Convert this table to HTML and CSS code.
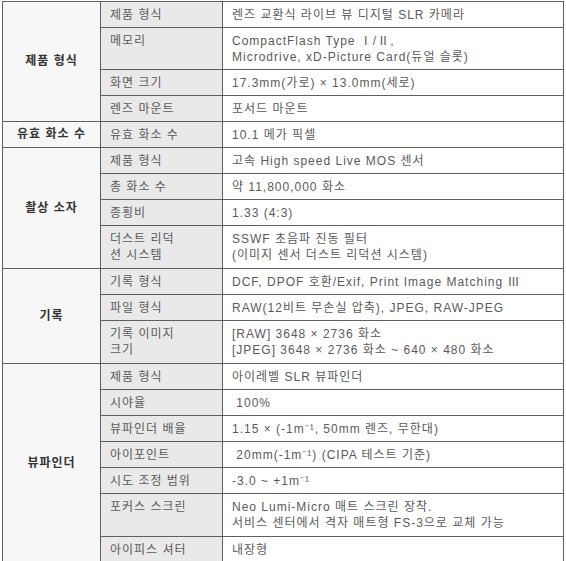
FILE: index.html
```html
<!DOCTYPE html>
<html lang="ko">
<head>
<meta charset="utf-8">
<link rel="stylesheet" href="styles.css">
</head>
<body>
<table class="spec">
<colgroup><col class="c1"><col class="c2"><col class="c3"></colgroup>
<tbody>
<tr><th class="grp" rowspan="4">제품 형식</th><td class="key">제품 형식</td><td class="val">렌즈 교환식 라이브 뷰 디지털 SLR 카메라</td></tr>
<tr><td class="key">메모리</td><td class="val">CompactFlash Type Ⅰ/Ⅱ,<br>Microdrive, xD-Picture Card(듀얼 슬롯)</td></tr>
<tr><td class="key">화면 크기</td><td class="val">17.3mm(가로) × 13.0mm(세로)</td></tr>
<tr><td class="key">렌즈 마운트</td><td class="val">포서드 마운트</td></tr>
<tr><th class="grp">유효 화소 수</th><td class="key">유효 화소 수</td><td class="val">10.1 메가 픽셀</td></tr>
<tr><th class="grp" rowspan="4">촬상 소자</th><td class="key">제품 형식</td><td class="val">고속 High speed Live MOS 센서</td></tr>
<tr><td class="key">총 화소 수</td><td class="val">약 11,800,000 화소</td></tr>
<tr><td class="key">종횡비</td><td class="val">1.33 (4:3)</td></tr>
<tr class="tall"><td class="key">더스트 리덕<br>션 시스템</td><td class="val">SSWF 초음파 진동 필터<br>(이미지 센서 더스트 리덕션 시스템)</td></tr>
<tr><th class="grp" rowspan="3">기록</th><td class="key">기록 형식</td><td class="val">DCF, DPOF 호환/Exif, Print Image Matching Ⅲ</td></tr>
<tr><td class="key">파일 형식</td><td class="val">RAW(12비트 무손실 압축), JPEG, RAW-JPEG</td></tr>
<tr class="tall"><td class="key">기록 이미지<br>크기</td><td class="val">[RAW] 3648 × 2736 화소<br>[JPEG] 3648 × 2736 화소 ~ 640 × 480 화소</td></tr>
<tr><th class="grp" rowspan="7">뷰파인더</th><td class="key">제품 형식</td><td class="val">아이레벨 SLR 뷰파인더</td></tr>
<tr><td class="key">시야율</td><td class="val">&nbsp;100%</td></tr>
<tr><td class="key">뷰파인더 배율</td><td class="val">1.15 × (-1m⁻¹, 50mm 렌즈, 무한대)</td></tr>
<tr><td class="key">아이포인트</td><td class="val">&nbsp;20mm(-1m⁻¹) (CIPA 테스트 기준)</td></tr>
<tr><td class="key">시도 조정 범위</td><td class="val">-3.0 ~ +1m⁻¹</td></tr>
<tr class="tall"><td class="key">포커스 스크린</td><td class="val">Neo Lumi-Micro 매트 스크린 장착.<br>서비스 센터에서 격자 매트형 FS-3으로 교체 가능</td></tr>
<tr><td class="key">아이피스 셔터</td><td class="val">내장형</td></tr>
</tbody>
</table>
</body>
</html>
```

FILE: styles.css
```css
html, body {
  margin: 0;
  padding: 0;
  background: #ffffff;
}
body {
  padding: 1px 0 0 2px;
  font-family: "Liberation Sans", "Noto Sans CJK KR", sans-serif;
  font-size: 12px;
  color: #5a5a5a;
}
.spec {
  border-collapse: collapse;
  table-layout: fixed;
  width: 561px;
}
.c1 { width: 98px; }
.c2 { width: 122px; }
.c3 { width: 341px; }
.spec th,
.spec td {
  border: 1px solid #5f5f5f;
  line-height: 16px;
  letter-spacing: 1px;
  text-align: left;
  vertical-align: top;
  padding: 5px 6px 4px 9px;
}
.spec .grp {
  background: #f7f7f7;
  color: #333333;
  font-weight: bold;
  text-align: center;
  vertical-align: middle;
  padding: 4px 2px 5px 2px;
  letter-spacing: 1px;
}
.spec .key {
  background: #e9e9e9;
}
.spec .val {
  background: #ffffff;
}
.spec tr.tall td {
  padding-bottom: 5px;
}
```
